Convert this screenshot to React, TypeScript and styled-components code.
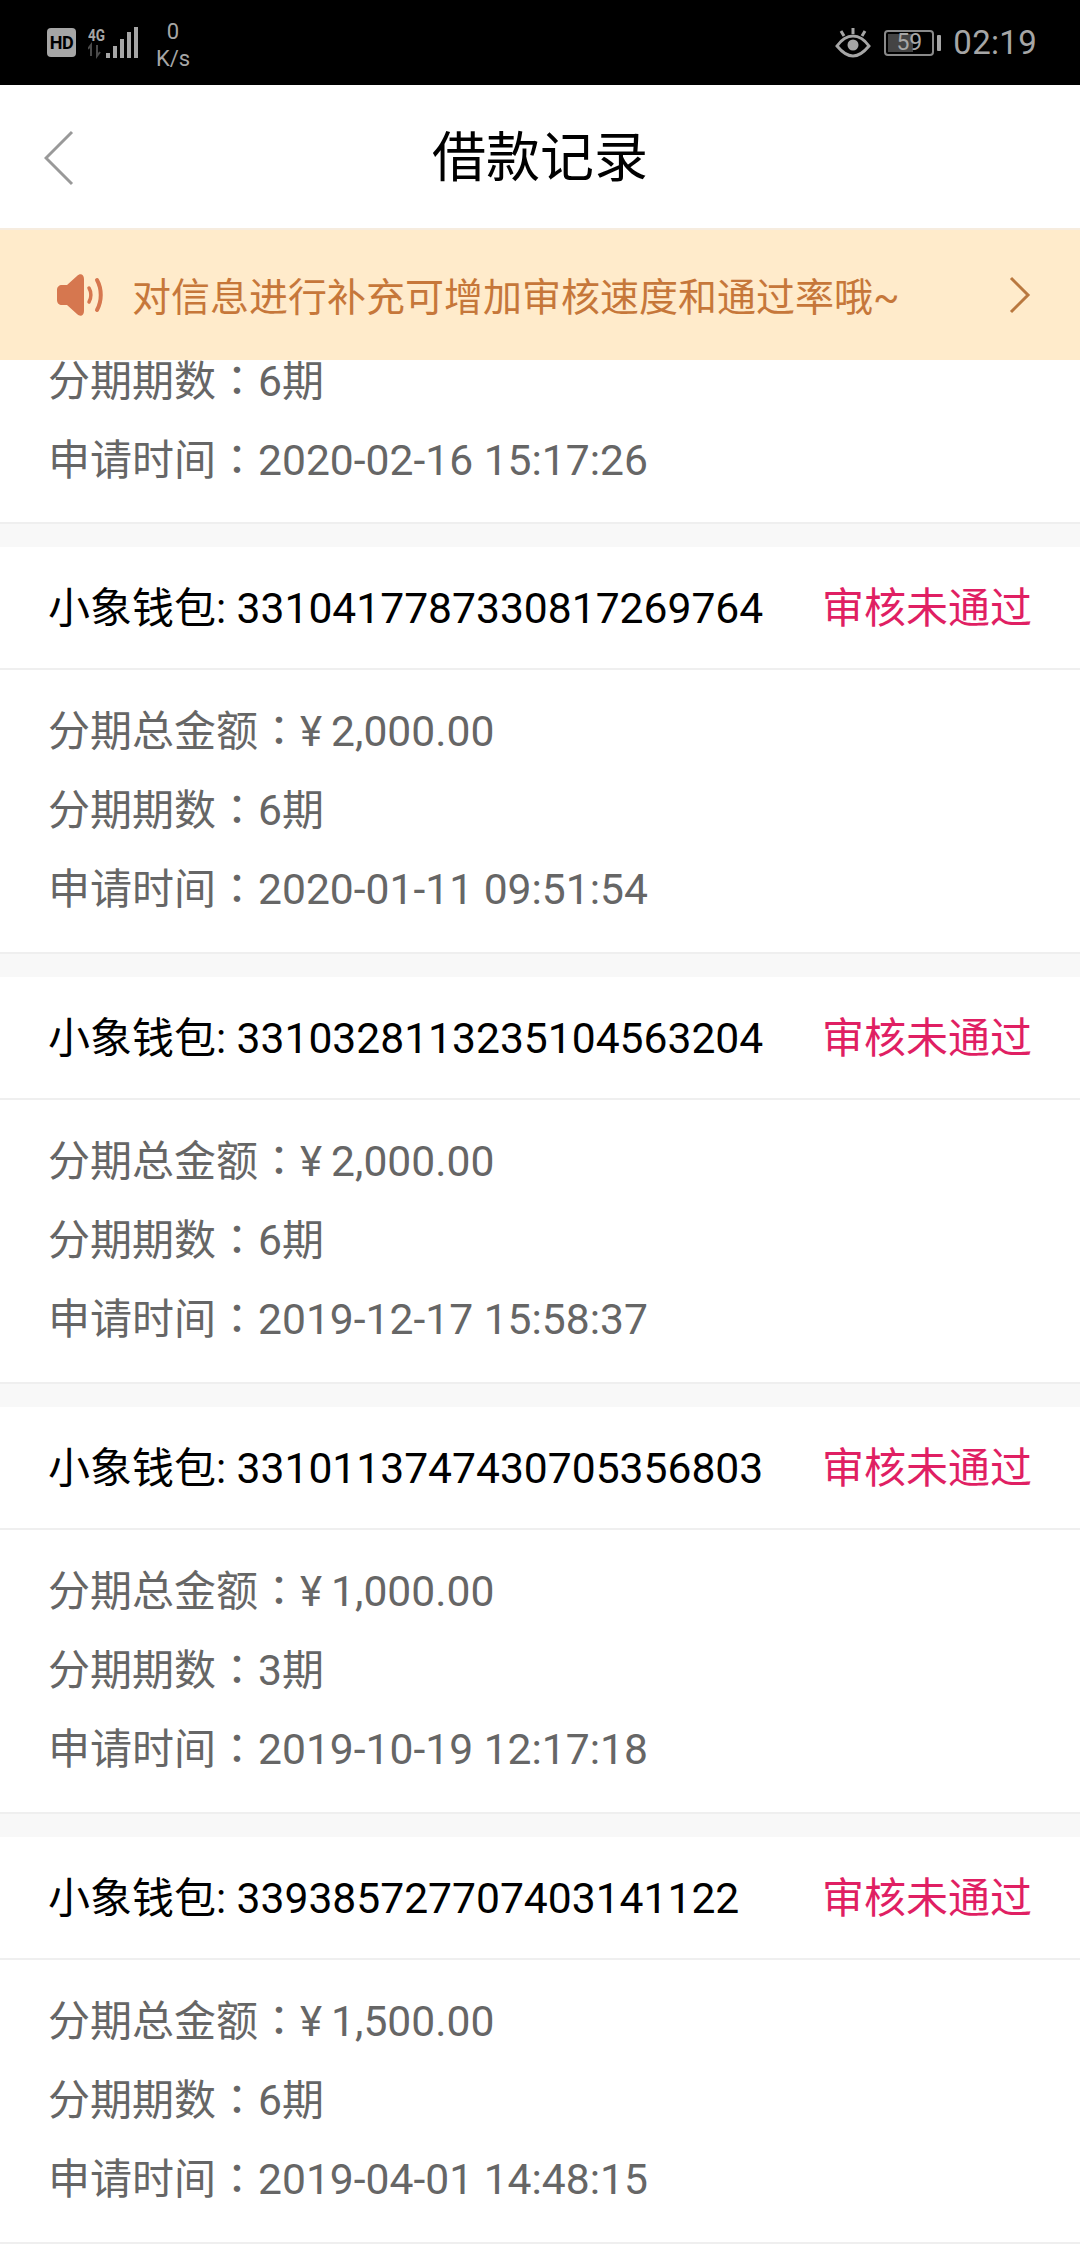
import React from 'react';
import styled, { createGlobalStyle } from 'styled-components';

interface LoanRecord {
  orderNo: string;
  amount: string;
  periods: string;
  appliedAt: string;
}

const records: LoanRecord[] = [
  { orderNo: '3310417787330817269764', amount: '2,000.00', periods: '6', appliedAt: '2020-01-11 09:51:54' },
  { orderNo: '3310328113235104563204', amount: '2,000.00', periods: '6', appliedAt: '2019-12-17 15:58:37' },
  { orderNo: '3310113747430705356803', amount: '1,000.00', periods: '3', appliedAt: '2019-10-19 12:17:18' },
  { orderNo: '339385727707403141122', amount: '1,500.00', periods: '6', appliedAt: '2019-04-01 14:48:15' },
];

function StatusBar() {
  return (
    <StyledStatusBar>
      <StatusGroup>
        <HdBadge>HD</HdBadge>
        <NetworkIcon width="50" height="32" viewBox="0 0 50 32">
          <text x="0" y="14" fontSize="17" fontWeight="700" fill="#a6a6a6" fontFamily="Roboto, sans-serif" textLength="17" lengthAdjust="spacingAndGlyphs">4G</text>
          <path d="M3 18v11M0 22l3-4v11M9 18v11l3-4" stroke="#4a4a4a" strokeWidth="2" fill="none" />
          <rect x="18" y="26" width="4" height="5" fill="#a6a6a6" />
          <rect x="25" y="19" width="4" height="12" fill="#a6a6a6" />
          <rect x="32" y="12" width="4" height="19" fill="#a6a6a6" />
          <rect x="39" y="5" width="4" height="26" fill="#a6a6a6" />
          <rect x="46" y="0" width="4" height="31" fill="#a6a6a6" />
        </NetworkIcon>
        <NetSpeed>
          <span>0</span>
          <span>K/s</span>
        </NetSpeed>
      </StatusGroup>
      <StatusGroup>
        <svg width="36" height="32" viewBox="0 0 36 32">
          <path d="M2 19c5-7 10-10 16-10s11 3 16 10c-5 6-10 10-16 10S7 25 2 19z" fill="none" stroke="#a6a6a6" strokeWidth="3" />
          <circle cx="18" cy="18" r="5.5" fill="#a6a6a6" />
          <path d="M18 1v6M6 4l3 5M30 4l-3 5" stroke="#a6a6a6" strokeWidth="3" />
        </svg>
        <Battery>
          <BatteryLevel />
          <BatteryText>59</BatteryText>
        </Battery>
        <BatteryNub />
        <Clock>02:19</Clock>
      </StatusGroup>
    </StyledStatusBar>
  );
}

function InfoRows({ amount, periods, appliedAt }: { amount?: string; periods: string; appliedAt: string }) {
  return (
    <>
      {amount && (
        <InfoRow>
          分期总金额<Colon>：</Colon><Yen>¥</Yen><Digits>{amount}</Digits>
        </InfoRow>
      )}
      <InfoRow>
        分期期数<Colon>：</Colon><Digits>{periods}</Digits>期
      </InfoRow>
      <InfoRow>
        申请时间<Colon>：</Colon><Digits>{appliedAt}</Digits>
      </InfoRow>
    </>
  );
}

function RecordCard({ record }: { record: LoanRecord }) {
  return (
    <Card>
      <CardHead>
        <OrderName>小象钱包: <Digits>{record.orderNo}</Digits></OrderName>
        <Status>审核未通过</Status>
      </CardHead>
      <CardBody>
        <InfoRows amount={record.amount} periods={record.periods} appliedAt={record.appliedAt} />
      </CardBody>
    </Card>
  );
}

export default function App() {
  return (
    <Page>
      <GlobalStyle />
      <StatusBar />
      <Header>
        <BackIcon width="30" height="56" viewBox="0 0 30 56">
          <path d="M28 2L2 28l26 26" fill="none" stroke="#999" strokeWidth="3" />
        </BackIcon>
        <Title>借款记录</Title>
      </Header>
      <Notice>
        <svg width="48" height="44" viewBox="0 0 48 44">
          <path d="M6 12h5L21 3c3-3 7-2 7 3v32c0 5-4 6-7 3L11 32H6c-3 0-5-2-5-5V17c0-3 2-5 5-5z" fill="#d6774f" />
          <path d="M33 15c2.500 4 2.500 10 0 14" fill="none" stroke="#d6774f" strokeWidth="3.500" strokeLinecap="round" />
          <path d="M41 7c5 9 5 21 0 30" fill="none" stroke="#d6774f" strokeWidth="4" strokeLinecap="round" />
        </svg>
        <NoticeText>对信息进行补充可增加审核速度和通过率哦~</NoticeText>
        <svg width="22" height="38" viewBox="0 0 22 38">
          <path d="M2 2l17 17L2 36" fill="none" stroke="#b9783f" strokeWidth="3" />
        </svg>
      </Notice>
      <RecordList>
        <ScrolledBody>
          <InfoRows periods="6" appliedAt="2020-02-16 15:17:26" />
        </ScrolledBody>
        {records.map((r) => (
          <RecordCard key={r.orderNo} record={r} />
        ))}
      </RecordList>
    </Page>
  );
}

const GlobalStyle = createGlobalStyle`
  html, body {
    margin: 0;
    padding: 0;
    background: #fff;
  }
`;

const Page = styled.div`
  width: 1080px;
  height: 2244px;
  overflow: hidden;
  display: flex;
  flex-direction: column;
  font-family: Roboto, "Noto Sans CJK SC", sans-serif;
`;

const StyledStatusBar = styled.div`
  height: 85px;
  flex: none;
  background: #000;
  color: #a6a6a6;
  display: flex;
  align-items: center;
  justify-content: space-between;
  padding: 0 43px 0 47px;
`;

const StatusGroup = styled.div`
  display: flex;
  align-items: center;
`;

const HdBadge = styled.div`
  width: 29px;
  height: 29px;
  border-radius: 4px;
  background: #a6a6a6;
  color: #000;
  font: 700 18px/29px Roboto, sans-serif;
  text-align: center;
  letter-spacing: -0.5px;
`;

const NetworkIcon = styled.svg`
  margin-left: 12px;
`;

const NetSpeed = styled.div`
  margin-left: 17px;
  width: 36px;
  display: flex;
  flex-direction: column;
  align-items: center;
  font-size: 22px;
  line-height: 27px;
  padding-top: 4px;
`;

const Battery = styled.div`
  position: relative;
  width: 50px;
  height: 26px;
  margin-left: 13px;
  border: 2px solid #8a8a8a;
  border-radius: 4px;
  box-sizing: border-box;
  padding: 2px;
`;

const BatteryLevel = styled.div`
  width: 59%;
  height: 100%;
  background: #444;
`;

const BatteryText = styled.span`
  position: absolute;
  inset: 0;
  text-align: center;
  font-size: 23px;
  line-height: 22px;
  color: #a6a6a6;
`;

const BatteryNub = styled.div`
  width: 4px;
  height: 16px;
  margin-left: 3px;
  border-radius: 1px;
  background: #a6a6a6;
`;

const Clock = styled.div`
  margin-left: 12px;
  font-size: 33px;
  letter-spacing: 0.3px;
`;

const Header = styled.header`
  height: 143px;
  flex: none;
  box-sizing: border-box;
  padding-bottom: 7px;
  background: #fff;
  position: relative;
  display: flex;
  align-items: center;
  justify-content: center;
`;

const BackIcon = styled.svg`
  position: absolute;
  left: 44px;
  top: 45px;
`;

const Title = styled.h1`
  margin: 0;
  font-size: 54px;
  font-weight: 400;
  color: #000;
`;

const Notice = styled.div`
  height: 132px;
  flex: none;
  box-sizing: border-box;
  background: #ffebcb;
  border-top: 2px solid #f6ecdf;
  display: flex;
  align-items: center;
  padding: 0 49px 0 56px;
`;

const NoticeText = styled.div`
  flex: 1;
  margin-left: 28px;
  margin-bottom: 3px;
  font-size: 39px;
  color: #c6773a;
`;

const RecordList = styled.div`
  flex: 1;
  overflow: hidden;
  background: #f8f8f8;
`;

const CardBody = styled.div`
  padding: 18px 0 27px;
  background: #fff;
  border-top: 2px solid #efefef;
  border-bottom: 2px solid #efefef;
`;

const ScrolledBody = styled(CardBody)`
  margin-top: -22px;
  padding: 0 0 26px;
  border-top: none;
`;

const InfoRow = styled.div`
  height: 79px;
  padding-left: 48px;
  font-size: 42px;
  line-height: 79px;
  color: #666;
  white-space: pre;
`;

const Colon = styled.span`
  font-family: "Noto Sans CJK TC", sans-serif;
`;

const Yen = styled.span`
  margin-right: 9px;
`;

const Digits = styled.span`
  font-size: 42.6px;
`;

const Card = styled.section`
  margin-top: 23px;
  background: #fff;
`;

const CardHead = styled.div`
  height: 121px;
  box-sizing: border-box;
  padding: 0 48px 6px;
  display: flex;
  align-items: center;
  justify-content: space-between;
`;

const OrderName = styled.div`
  font-size: 42px;
  color: #000;
`;

const Status = styled.div`
  font-size: 42px;
  color: #e01f63;
`;
